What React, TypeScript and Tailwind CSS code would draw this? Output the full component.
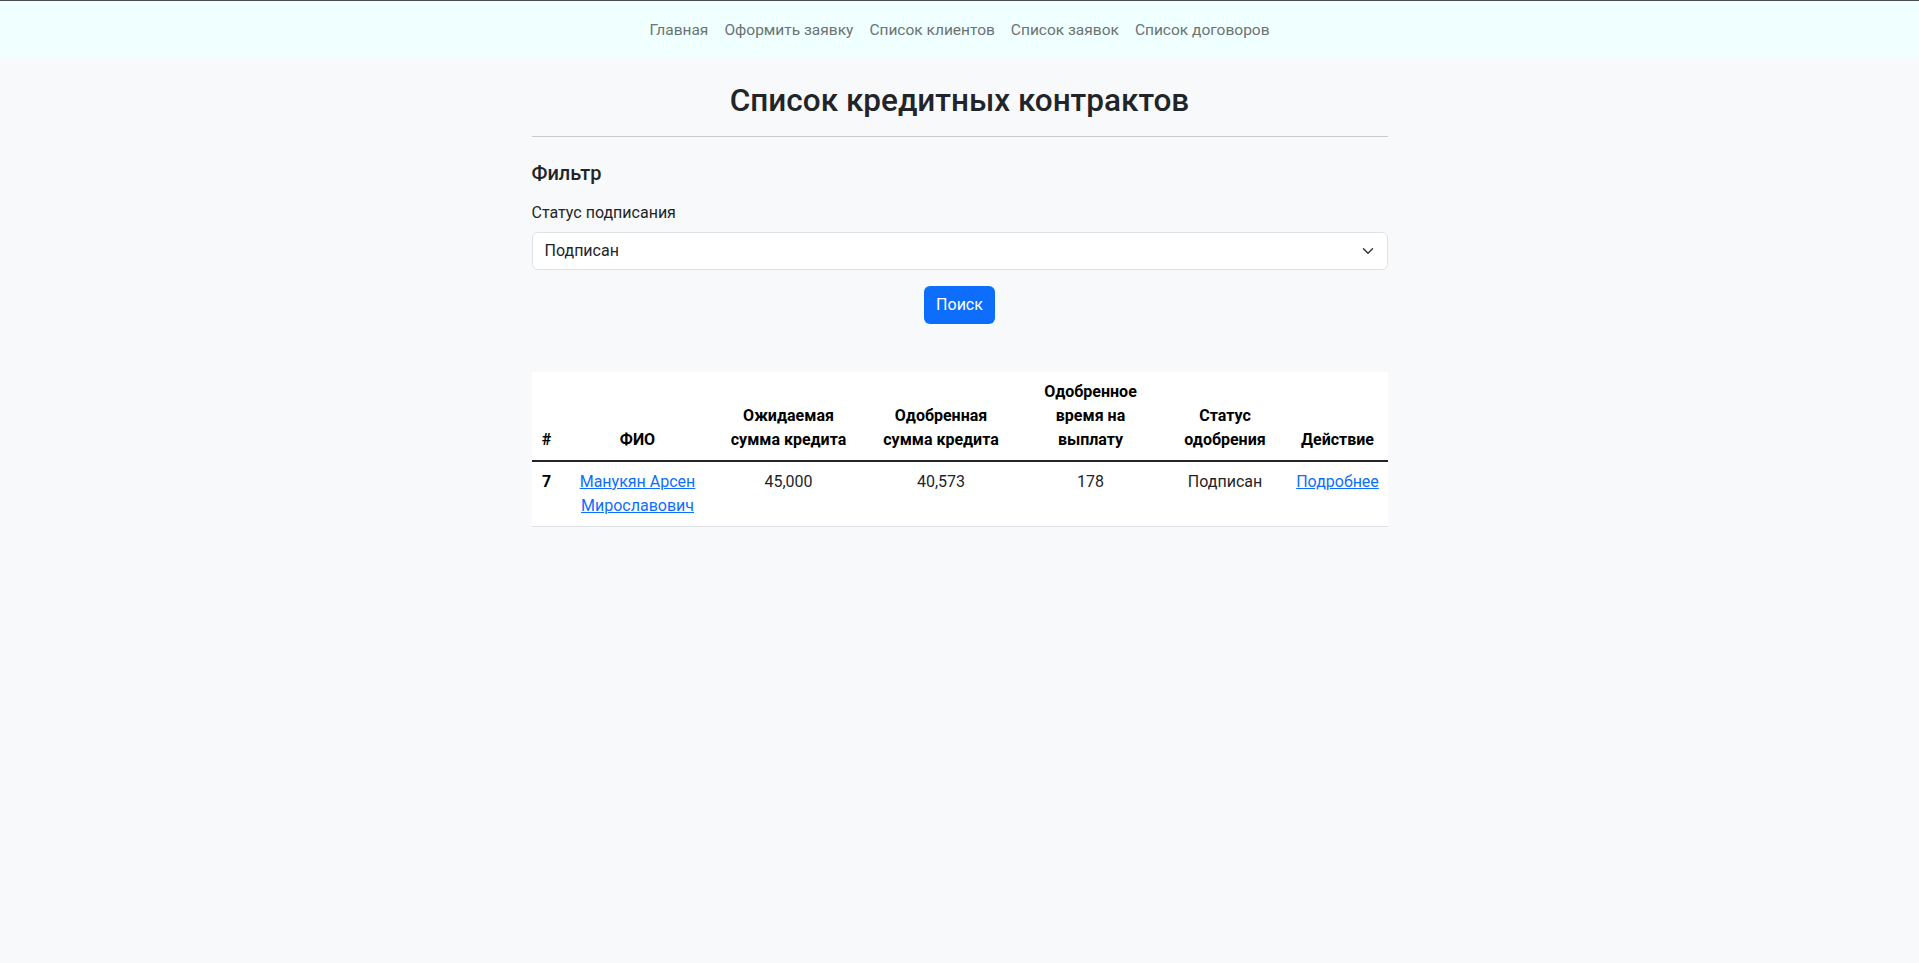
import React from "react";

const links = ["Главная", "Оформить заявку", "Список клиентов", "Список заявок", "Список договоров"];

const rows = [
  {
    id: 7,
    name: "Манукян Арсен Мирославович",
    expected: "45,000",
    approved: "40,573",
    term: "178",
    status: "Подписан",
  },
];

const App = () => {
  return (
    <div
      className="min-h-screen bg-[#f8f9fa] text-[#212529] text-base leading-6"
      style={{ fontFamily: "Roboto, 'Noto Sans', sans-serif" }}
    >
      <nav className="border-t border-[#4d4d4d] bg-[#f0ffff] pt-[9px] pb-[7px]">
        <ul className="flex justify-center">
          {links.map((l) => (
            <li key={l}>
              <a href="#" className="block px-2 py-2 text-[15.5px] text-[#6b7373] leading-6">
                {l}
              </a>
            </li>
          ))}
        </ul>
      </nav>

      <main className="mx-auto w-[856px] pt-[25px]">
        <h2 className="text-center text-[31.5px] font-medium leading-[1.2] mb-4">
          Список кредитных контрактов
        </h2>
        <hr className="border-0 border-t border-[#c9cacb] mb-6" />

        <h5 className="text-xl font-medium leading-6 mb-4">Фильтр</h5>
        <label className="block mb-[7px]">Статус подписания</label>
        <div className="relative">
          <select className="appearance-none w-full h-[38px] bg-white border border-[#dee2e6] rounded-md pl-3 pr-9 text-base outline-none">
            <option>Подписан</option>
            <option>Не подписан</option>
          </select>
          <svg
            className="pointer-events-none absolute right-3 top-1/2 -translate-y-1/2"
            width="16"
            height="12"
            viewBox="0 0 16 16"
            fill="none"
            stroke="#343a40"
            strokeWidth="2"
            strokeLinecap="round"
            strokeLinejoin="round"
          >
            <path d="m2 5 6 6 6-6" />
          </svg>
        </div>

        <div className="flex justify-center mt-4">
          <button className="h-[38px] px-3 rounded-md bg-[#0d6efd] text-white">Поиск</button>
        </div>

        <table className="table-fixed w-full mt-12 bg-white text-center">
          <colgroup>
            <col className="w-[30px]" />
            <col className="w-[152px]" />
            <col className="w-[150px]" />
            <col className="w-[155px]" />
            <col className="w-[144px]" />
            <col className="w-[125px]" />
            <col className="w-[100px]" />
          </colgroup>
          <thead className="align-bottom text-black font-bold">
            <tr className="border-b-2 border-[#212529]">
              <th className="p-2 font-bold">#</th>
              <th className="p-2 font-bold">ФИО</th>
              <th className="p-2 font-bold">Ожидаемая сумма кредита</th>
              <th className="p-2 font-bold">Одобренная сумма кредита</th>
              <th className="p-2 font-bold">Одобренное время на выплату</th>
              <th className="p-2 font-bold">Статус одобрения</th>
              <th className="p-2 font-bold">Действие</th>
            </tr>
          </thead>
          <tbody className="align-top">
            {rows.map((r) => (
              <tr key={r.id} className="border-b border-[#dee2e6]">
                <th className="p-2 font-bold text-black">{r.id}</th>
                <td className="p-2">
                  <a href="#" className="text-[#0d6efd] underline">
                    {r.name}
                  </a>
                </td>
                <td className="p-2">{r.expected}</td>
                <td className="p-2">{r.approved}</td>
                <td className="p-2">{r.term}</td>
                <td className="p-2">{r.status}</td>
                <td className="p-2">
                  <a href="#" className="text-[#0d6efd] underline">
                    Подробнее
                  </a>
                </td>
              </tr>
            ))}
          </tbody>
        </table>
      </main>
    </div>
  );
};

export default App;
